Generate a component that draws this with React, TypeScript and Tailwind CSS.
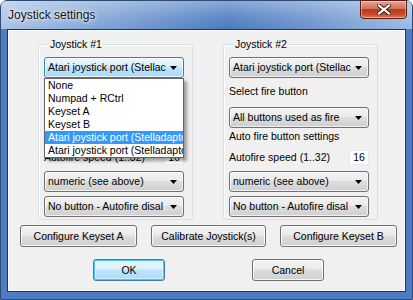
import React from 'react';

const font = { fontFamily: '"Liberation Sans", Arial, sans-serif' };

function Arrow() {
  return (
    <svg width="7" height="4" viewBox="0 0 7 4" className="shrink-0">
      <path d="M0 0 H7 L3.5 4 Z" fill="#000" />
    </svg>
  );
}

function Combo({ text, focused = false }: { text: string; focused?: boolean }) {
  const look = focused
    ? 'border-[#3c7fb1] bg-[linear-gradient(to_bottom,#eaf6fd_0%,#d9f0fc_45%,#bee6fd_50%,#a7d9f5_100%)]'
    : 'border-[#707070] bg-[linear-gradient(to_bottom,#f2f2f2_0%,#ebebeb_45%,#dddddd_50%,#cfcfcf_100%)]';
  return (
    <div className={`h-[21px] w-[140px] flex items-center justify-between pl-[3px] pr-[6px] border rounded-[3px] shadow-[inset_0_0_0_1px_rgba(255,255,255,0.7)] ${look}`}>
      <span className="whitespace-nowrap overflow-hidden w-[120px] leading-[13px]">{text}</span>
      <Arrow />
    </div>
  );
}

function Button({ label, w, isDefault = false }: { label: string; w: string; isDefault?: boolean }) {
  const look = isDefault
    ? 'border-[#3c7fb1] bg-[linear-gradient(to_bottom,#eaf6fd_0%,#d9f0fc_45%,#bee6fd_50%,#a7d9f5_100%)] shadow-[inset_0_0_0_1px_#48c8f8,inset_0_0_0_2px_rgba(255,255,255,0.5)]'
    : 'border-[#707070] bg-[linear-gradient(to_bottom,#f2f2f2_0%,#ebebeb_45%,#dddddd_50%,#cfcfcf_100%)] shadow-[inset_0_0_0_1px_rgba(255,255,255,0.8)]';
  return (
    <div className={`h-[22px] ${w} flex items-center justify-center border rounded-[3px] ${look}`}>
      <span className="leading-[13px]">{label}</span>
    </div>
  );
}

const listItems = [
  'None',
  'Numpad + RCtrl',
  'Keyset A',
  'Keyset B',
  'Atari joystick port (Stelladaptor)',
  'Atari joystick port (Stelladaptor)',
];

function DropList() {
  return (
    <div className="absolute top-full left-0 w-[140px] bg-white border border-[#646464] shadow-[3px_3px_3px_rgba(0,0,0,0.35)] z-10">
      {listItems.map((t, i) => (
        <div
          key={i}
          className={`h-[13px] leading-[13px] pl-[3px] whitespace-nowrap overflow-hidden ${i === 4 ? 'bg-[#3399ff] text-white' : ''}`}
        >
          {t}
        </div>
      ))}
    </div>
  );
}

function Group({ title, open = false }: { title: string; open?: boolean }) {
  return (
    <fieldset className="w-[155px] border border-[#d5dfe5] rounded-[3px] pl-[5px] pb-[2px] shadow-[inset_1px_1px_0_#fff]">
      <legend className="ml-[5px] px-[1px] leading-[13px]">{title}</legend>
      <div className="relative mt-[6px]">
        <Combo text="Atari joystick port (Stellac" focused={open} />
        {open && <DropList />}
      </div>
      <div className="mt-[7px] h-[13px] leading-[13px]">Select fire button</div>
      <div className="mt-[9px]">
        <Combo text="All buttons used as fire" />
      </div>
      <div className="mt-[2px] h-[13px] leading-[13px]">Auto fire button settings</div>
      <div className="mt-[6px] w-[140px] h-[16px] flex items-center justify-between">
        <span className="leading-[13px]">Autofire speed (1..32)</span>
        <span className="w-[20px] h-[15px] bg-white border border-[#e3e9ef] flex items-center justify-center leading-[13px]">16</span>
      </div>
      <div className="mt-[6px]">
        <Combo text="numeric (see above)" />
      </div>
      <div className="mt-[4px]">
        <Combo text="No button - Autofire disal" />
      </div>
    </fieldset>
  );
}

export default function App() {
  return (
    <div className="w-[413px] h-[300px] text-[10.5px] text-black" style={font}>
      <div className="h-full flex flex-col rounded-t-[7px] border border-[#2c4a72] bg-[linear-gradient(to_right,#a9c3e8_0%,#7fa3d6_25%,#4b7abf_55%,#6c93cd_75%,#9bbae3_100%)]">
        <div className="h-[28px] flex items-start justify-between pl-[7px] pr-[5px] bg-[linear-gradient(to_bottom,rgba(255,255,255,0.35)_0%,rgba(255,255,255,0.1)_60%,rgba(255,255,255,0)_100%)]">
          <span className="mt-[7px] text-[12px] leading-[15px] text-[#111] [text-shadow:0_0_6px_#fff,0_0_3px_#fff]">Joystick settings</span>
          <div className="w-[47px] h-[19px] -mt-[1px] rounded-b-[4px] border border-[#5b1a12] bg-[linear-gradient(to_bottom,#e8a494_0%,#d0705c_45%,#b93a20_50%,#c94c2c_80%,#e07a58_100%)] flex items-center justify-center shadow-[inset_0_0_0_1px_rgba(255,255,255,0.4)]">
            <svg width="14" height="11" viewBox="0 0 14 11">
              <path d="M2 1.5 L12 9.5 M12 1.5 L2 9.5" stroke="#3a1a14" strokeWidth="4" strokeLinecap="square" />
              <path d="M2 1.5 L12 9.5 M12 1.5 L2 9.5" stroke="#fff" strokeWidth="2.2" strokeLinecap="square" />
            </svg>
          </div>
        </div>
        <div className="flex-1 px-[6px] pb-[7px] bg-[#4d7cc2]">
          <div className="h-full border border-[#1f3658] bg-[#f0f0f0] shadow-[inset_0_0_0_1px_#fff]">
            <div className="flex pl-[30px] gap-[30px] mt-[8px]">
              <Group title="Joystick #1" open />
              <Group title="Joystick #2" />
            </div>
            <div className="flex pl-[12px] gap-[14px] mt-[5px]">
              <Button label="Configure Keyset A" w="w-[117px]" />
              <Button label="Calibrate Joystick(s)" w="w-[115px]" />
              <Button label="Configure Keyset B" w="w-[117px]" />
            </div>
            <div className="flex pl-[85px] gap-[87px] mt-[12px]">
              <Button label="OK" w="w-[72px]" isDefault />
              <Button label="Cancel" w="w-[72px]" />
            </div>
          </div>
        </div>
      </div>
    </div>
  );
}
